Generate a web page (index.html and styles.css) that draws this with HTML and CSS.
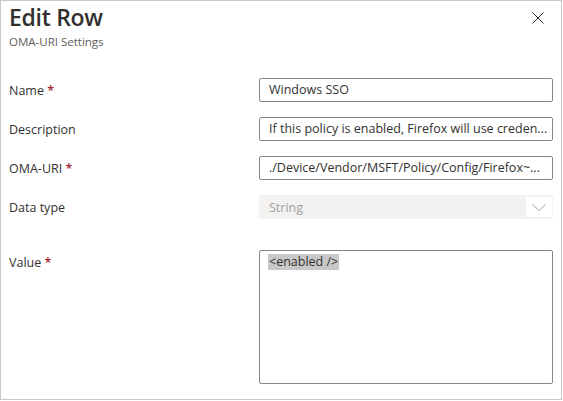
FILE: index.html
```html
<!DOCTYPE html>
<html lang="en">
<head>
<meta charset="utf-8">
<title>Edit Row</title>
<link rel="stylesheet" href="styles.css">
</head>
<body>
<div class="panel">
  <div class="header">
    <div class="heading">
      <h1 class="title">Edit Row</h1>
      <div class="subtitle">OMA-URI Settings</div>
    </div>
    <button class="close" aria-label="Close">
      <svg width="12" height="12" viewBox="0 0 12 12"><path d="M0.5 0.5 L11.5 11.5 M11.5 0.5 L0.5 11.5" stroke="#323130" stroke-width="1" fill="none"/></svg>
    </button>
  </div>
  <div class="form">
    <div class="row">
      <label class="label">Name <span class="req">*</span></label>
      <div class="field"><div class="input">Windows SSO</div></div>
    </div>
    <div class="row">
      <label class="label">Description</label>
      <div class="field"><div class="input">If this policy is enabled, Firefox will use creden...</div></div>
    </div>
    <div class="row">
      <label class="label">OMA-URI <span class="req">*</span></label>
      <div class="field"><div class="input">./Device/Vendor/MSFT/Policy/Config/Firefox~...</div></div>
    </div>
    <div class="row">
      <label class="label">Data type</label>
      <div class="field">
        <div class="select">
          <span class="select-text">String</span>
          <span class="chev"><svg width="14" height="7" viewBox="0 0 14 7"><path d="M0.5 0.5 L7 6.5 L13.5 0.5" stroke="#a19f9d" stroke-width="1" fill="none"/></svg></span>
        </div>
      </div>
    </div>
    <div class="row row-value">
      <label class="label label-top">Value <span class="req">*</span></label>
      <div class="field"><div class="textarea"><span class="sel">&lt;enabled /&gt;</span></div></div>
    </div>
  </div>
</div>
</body>
</html>
```

FILE: styles.css
```css
html, body {
  margin: 0;
  padding: 0;
  background: #ffffff;
}
body {
  font-family: "Open Sans", "Noto Sans", sans-serif;
  color: #323130;
}
.panel {
  box-sizing: border-box;
  width: 562px;
  height: 400px;
  border: 1px solid #c8c8c8;
  padding: 0 8px;
  background: #fff;
}
.header {
  box-sizing: border-box;
  display: flex;
  justify-content: space-between;
  align-items: flex-start;
  height: 77px;
  padding-top: 1px;
}
.title {
  margin: 0;
  font-size: 23px;
  line-height: 30px;
  font-weight: 600;
  color: #323130;
  letter-spacing: -0.3px;
}
.subtitle {
  font-size: 11.5px;
  line-height: 16px;
  color: #605e5c;
  margin-top: 2px;
}
.close {
  border: 0;
  background: transparent;
  padding: 0;
  margin: 10px 9px 0 0;
  width: 12px;
  height: 12px;
  display: flex;
}
.form {
  display: flex;
  flex-direction: column;
  gap: 15px;
}
.row {
  display: grid;
  grid-template-columns: 250px 294px;
  align-items: center;
}
.row-value {
  margin-top: 16px;
  align-items: start;
}
.label {
  font-size: 12.5px;
  color: #323130;
}
.label-top {
  padding-top: 4px;
}
.req {
  color: #a4262c;
  font-weight: 600;
}
.input {
  box-sizing: border-box;
  height: 24px;
  border: 1px solid #8a8886;
  border-radius: 2px;
  padding: 0 8px 0 9px;
  font-size: 12.5px;
  line-height: 22px;
  white-space: nowrap;
  overflow: hidden;
  color: #323130;
}
.select {
  box-sizing: border-box;
  height: 24px;
  background: #f3f2f1;
  border-radius: 2px;
  display: flex;
  align-items: center;
  justify-content: space-between;
  padding: 2px 1px 2px 10px;
}
.select-text {
  font-size: 12.5px;
  color: #a19f9d;
}
.chev {
  width: 26px;
  height: 20px;
  background: #fff;
  display: flex;
  align-items: center;
  justify-content: center;
}
.textarea {
  box-sizing: border-box;
  height: 134px;
  border: 1px solid #8a8886;
  border-radius: 2px;
  padding: 3px 8px 0 8px;
  font-size: 12.5px;
  line-height: 16px;
}
.sel {
  background: #c8c8c8;
  display: inline-block;
  padding: 0 1px;
}
```
